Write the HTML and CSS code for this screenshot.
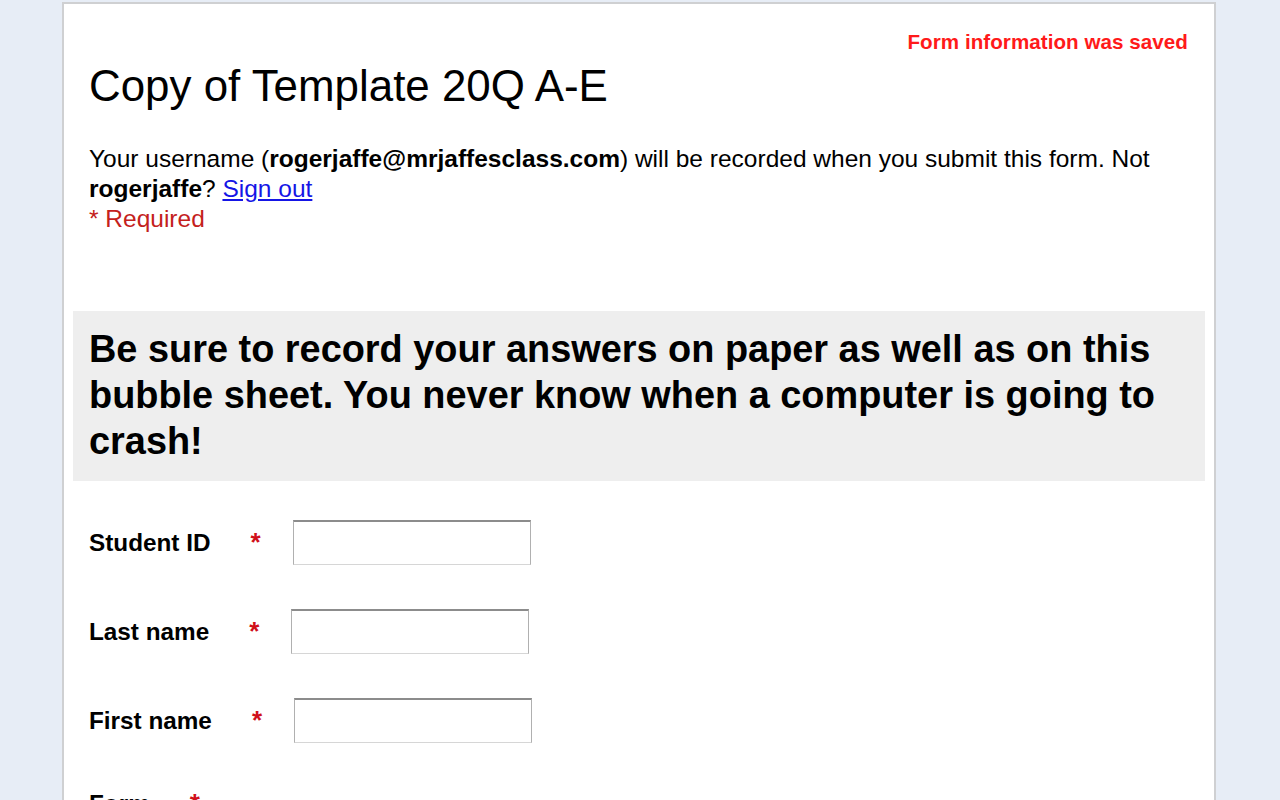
FILE: index.html
```html
<!DOCTYPE html>
<html lang="en">
<head>
<meta charset="utf-8">
<title>Copy of Template 20Q A-E</title>
<link rel="stylesheet" href="styles.css">
</head>
<body>
<div class="panel">
  <div class="header">
    <div class="saved">Form information was saved</div>
    <h1 class="title">Copy of Template 20Q A-E</h1>
    <div class="intro">
      Your username (<b>rogerjaffe@mrjaffesclass.com</b>) will be recorded when you submit this form. Not <b>rogerjaffe</b>? <a href="#" class="signout">Sign out</a>
      <div class="required-note">* Required</div>
    </div>
  </div>
  <div class="notice">Be sure to record your answers on paper as well as on this bubble sheet. You never know when a computer is going to crash!</div>
  <form class="fields">
    <div class="row">
      <label class="qlabel" for="sid">Student ID<span class="star">*</span></label>
      <input class="text" id="sid" type="text">
    </div>
    <div class="row">
      <label class="qlabel" for="lname">Last name<span class="star">*</span></label>
      <input class="text" id="lname" type="text">
    </div>
    <div class="row">
      <label class="qlabel" for="fname">First name<span class="star">*</span></label>
      <input class="text" id="fname" type="text">
    </div>
    <div class="block">
      <div class="qlabel">Form<span class="star">*</span></div>
      <div class="choices">
        <label class="choice"><input type="radio" name="form"> A</label>
        <label class="choice"><input type="radio" name="form"> B</label>
        <label class="choice"><input type="radio" name="form"> C</label>
        <label class="choice"><input type="radio" name="form"> D</label>
        <label class="choice"><input type="radio" name="form"> E</label>
      </div>
    </div>
  </form>
</div>
</body>
</html>
```
FILE: styles.css
```css
html, body {
  margin: 0;
  padding: 0;
}
body {
  background: #e7edf6;
  font-family: "Liberation Sans", Arial, sans-serif;
  color: #000;
  overflow: hidden;
  height: 800px;
}
.panel {
  margin: 2px 0 0 62px;
  width: 1150px;
  min-height: 900px;
  background: #fff;
  border: 2px solid #cfd0d2;
  border-bottom: none;
}
.header {
  padding: 26px 26px 0 25px;
}
.saved {
  text-align: right;
  color: #ff1a1a;
  font-weight: bold;
  font-size: 20.6px;
  letter-spacing: 0.05px;
  line-height: 24px;
}
.title {
  margin: 7px 0 0 0;
  font-weight: normal;
  font-size: 43.9px;
  line-height: 50px;
}
.intro {
  margin-top: 32.5px;
  font-size: 24.5px;
  line-height: 30px;
}
.signout {
  color: #1515e6;
  text-decoration: underline;
}
.required-note {
  color: #c4211c;
}
.notice {
  margin: 77.5px 9px 0 9px;
  background: #eeeeee;
  padding: 14.5px 16px 17px 16px;
  font-weight: bold;
  font-size: 37.9px;
  line-height: 46px;
}
.fields {
  margin: 0;
  padding: 39px 25px 0 25px;
}
.row {
  display: flex;
  align-items: center;
  margin-bottom: 44px;
}
.block {
  padding-top: 1px;
}
.qlabel {
  font-weight: bold;
  font-size: 24.3px;
  line-height: 30px;
}
.star {
  color: #d0101a;
  font-size: 26px;
  margin-left: 40px;
  margin-right: 32px;
}
.text {
  box-sizing: border-box;
  width: 238px;
  height: 45px;
  margin: 0;
  padding: 4px;
  background: #fff;
  border-style: solid;
  border-width: 2px 1px 1px 1px;
  border-color: #8c8c8c #b0b0b0 #d6d6d6 #b0b0b0;
  font-size: 20px;
  font-family: "Liberation Sans", Arial, sans-serif;
}
.choices {
  display: flex;
  flex-direction: column;
  gap: 8px;
  margin-top: 20px;
  font-size: 22px;
}
.choice {
  display: flex;
  align-items: center;
  gap: 6px;
}
```
